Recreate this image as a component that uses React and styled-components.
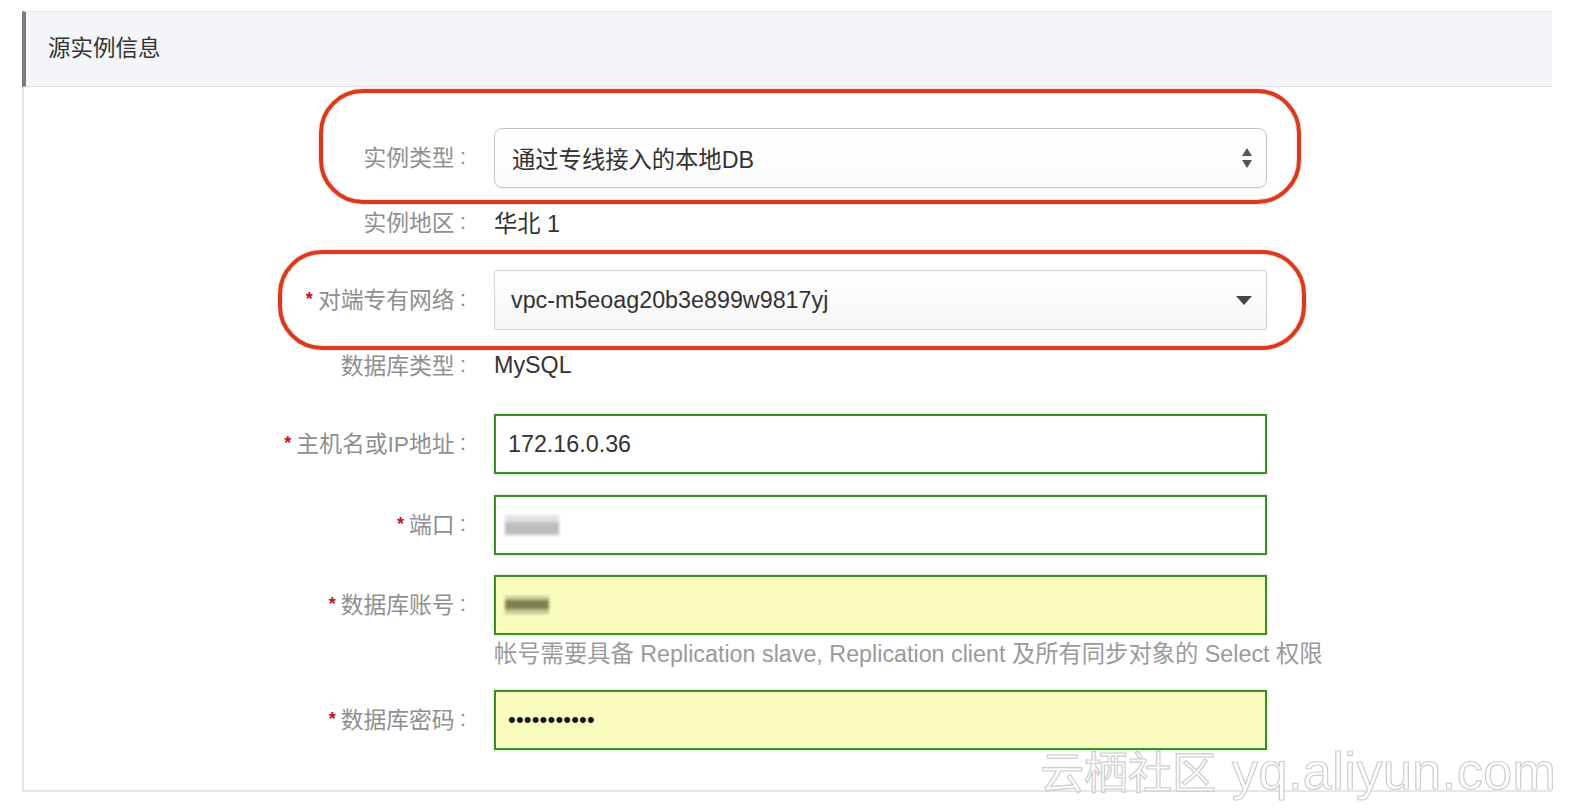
import React from "react";
import styled, { createGlobalStyle } from "styled-components";

const Global = createGlobalStyle`
  html, body { margin: 0; padding: 0; background: #ffffff; }
  body { font-family: "Liberation Sans", "Noto Sans CJK SC", sans-serif; }
`;

const Page = styled.div`
  position: relative;
  width: 1574px;
  height: 812px;
  padding: 11px 0 0 22px;
  box-sizing: border-box;
  overflow: hidden;
`;

const Panel = styled.section`
  width: 1530px;
  border-left: 2px solid #e6e6e6;
  border-bottom: 2px solid #e6e6e6;
  box-sizing: border-box;
`;

const Header = styled.header`
  height: 76px;
  margin-left: -2px;
  display: flex;
  align-items: center;
  padding: 0 0 7px 22px;
  background: #f3f5f8;
  border-left: 4px solid #7b7b84;
  border-top: 1px solid #e6e8ec;
  border-bottom: 1px solid #e0e3e8;
  box-sizing: border-box;
  font-size: 22.5px;
  color: #333;
`;

const Form = styled.div`
  display: flex;
  flex-direction: column;
  padding: 41px 0 40px 0;
`;

const Row = styled.div`
  display: grid;
  grid-template-columns: 442px 773px;
  column-gap: 28px;
  align-items: start;
  margin-top: ${(p) => p.$mt || 0}px;
`;

const Label = styled.div`
  height: ${(p) => (p.$compact ? 28 : 60)}px;
  box-sizing: border-box;
  padding-bottom: ${(p) => (p.$compact ? 1 : 4)}px;
  display: flex;
  align-items: center;
  justify-content: flex-end;
  font-size: 22.8px;
  color: #8f8f8f;
  white-space: nowrap;
`;

const Star = styled.span`
  color: #c4121f;
  font-size: 18px;
  font-weight: bold;
  margin-right: 5px;
  position: relative;
  top: 1px;
`;

const Colon = styled.span`
  margin-left: 5px;
`;

const Value = styled.div`
  height: 28px;
  display: flex;
  align-items: center;
  font-size: 23.3px;
  color: #333;
`;

const Control = styled.div`
  display: flex;
  flex-direction: column;
`;

const SelectBox = styled.div`
  height: 60px;
  box-sizing: border-box;
  display: flex;
  align-items: center;
  justify-content: space-between;
  padding: 0 ${(p) => (p.$rounded ? 13 : 14)}px 0 ${(p) => (p.$rounded ? 17 : 16)}px;
  border: 1px solid ${(p) => (p.$rounded ? "#c6c6c6" : "#d2d2d2")};
  border-radius: ${(p) => (p.$rounded ? 8 : 2)}px;
  background: ${(p) =>
    p.$rounded
      ? "linear-gradient(#ffffff, #fbfbfb)"
      : "linear-gradient(#ffffff, #f6f6f6)"};
  box-shadow: ${(p) => (p.$rounded ? "0 1px 1px rgba(0,0,0,0.06)" : "none")};
  font-size: 23.3px;
  color: #333;
`;

const TextInput = styled.div`
  height: 60px;
  box-sizing: border-box;
  display: flex;
  align-items: center;
  padding: 0 12px;
  border: 2px solid #3f8c30;
  box-shadow: 0 0 2px rgba(120, 200, 100, 0.7);
  background: ${(p) => (p.$filled ? "#f9fcbd" : "#ffffff")};
  font-size: 23.3px;
  color: #333;
`;

const Mosaic = styled.div`
  width: ${(p) => p.$w}px;
  height: ${(p) => p.$h}px;
  background: ${(p) => p.$bg};
  filter: blur(1.6px);
  margin-left: -3px;
`;

const Dots = styled.span`
  font-size: 22px;
  letter-spacing: 0.2px;
  color: #111;
`;

const Help = styled.div`
  height: 28px;
  margin-top: 3px;
  display: flex;
  align-items: center;
  font-size: 23.3px;
  color: #9a9a9a;
  white-space: nowrap;
`;

const Mark = styled.div`
  position: absolute;
  left: ${(p) => p.$x}px;
  top: ${(p) => p.$y}px;
  width: ${(p) => p.$w}px;
  height: ${(p) => p.$h}px;
  box-sizing: border-box;
  border: 4.5px solid #d83a1e;
  border-radius: 44px;
  box-shadow: 0 0 2px rgba(216, 58, 30, 0.5), inset 0 0 2px rgba(216, 58, 30, 0.5);
  pointer-events: none;
`;

const Watermark = styled.div`
  position: absolute;
  left: 1040px;
  top: 738px;
  display: flex;
  align-items: baseline;
  gap: 16px;
  color: rgba(255, 255, 255, 0.92);
  -webkit-text-stroke: 1.2px #cdcdcd;
  white-space: nowrap;
  pointer-events: none;
`;

const WaterPart = styled.span`
  font-size: ${(p) => p.$size}px;
  letter-spacing: ${(p) => p.$ls || 0}px;
`;

const UpDown = () => (
  <svg width="12" height="22" viewBox="0 0 12 22">
    <path d="M6 1 L11 9 L1 9 Z" fill="#555" />
    <path d="M1 13 L11 13 L6 21 Z" fill="#555" />
  </svg>
);

const Caret = () => (
  <svg width="16" height="9" viewBox="0 0 16 9">
    <path d="M0 0 L16 0 L8 9 Z" fill="#444" />
  </svg>
);

const FieldLabel = ({ required, children, compact }) => (
  <Label $compact={compact}>
    {required && <Star>*</Star>}
    {children}
    <Colon>:</Colon>
  </Label>
);

export default function App() {
  return (
    <>
      <Global />
      <Page>
        <Panel>
          <Header>源实例信息</Header>
          <Form>
            <Row>
              <FieldLabel>实例类型</FieldLabel>
              <SelectBox $rounded>
                <span>通过专线接入的本地DB</span>
                <UpDown />
              </SelectBox>
            </Row>
            <Row $mt={20}>
              <FieldLabel compact>实例地区</FieldLabel>
              <Value>华北 1</Value>
            </Row>
            <Row $mt={34}>
              <FieldLabel required>对端专有网络</FieldLabel>
              <SelectBox>
                <span>vpc-m5eoag20b3e899w9817yj</span>
                <Caret />
              </SelectBox>
            </Row>
            <Row $mt={21}>
              <FieldLabel compact>数据库类型</FieldLabel>
              <Value>MySQL</Value>
            </Row>
            <Row $mt={35}>
              <FieldLabel required>主机名或IP地址</FieldLabel>
              <TextInput>172.16.0.36</TextInput>
            </Row>
            <Row $mt={21}>
              <FieldLabel required>端口</FieldLabel>
              <TextInput>
                <Mosaic $w={54} $h={20} $bg="linear-gradient(#e2e2e2 0 35%, #bdbdbd 35% 100%)" />
              </TextInput>
            </Row>
            <Row $mt={20}>
              <FieldLabel required>数据库账号</FieldLabel>
              <Control>
                <TextInput $filled>
                  <Mosaic $w={44} $h={18} $bg="linear-gradient(#c9cc9a 0 25%, #7d8150 25% 75%, #c4c896 75% 100%)" />
                </TextInput>
                <Help>帐号需要具备 Replication slave, Replication client 及所有同步对象的 Select 权限</Help>
              </Control>
            </Row>
            <Row $mt={24}>
              <FieldLabel required>数据库密码</FieldLabel>
              <TextInput $filled>
                <Dots>•••••••••••</Dots>
              </TextInput>
            </Row>
          </Form>
        </Panel>
        <Mark $x={319} $y={89} $w={982} $h={115} />
        <Mark $x={278} $y={250} $w={1028} $h={100} />
        <Watermark>
          <WaterPart $size={44}>云栖社区</WaterPart>
          <WaterPart $size={52} $ls={0.5}>yq.aliyun.com</WaterPart>
        </Watermark>
      </Page>
    </>
  );
}
